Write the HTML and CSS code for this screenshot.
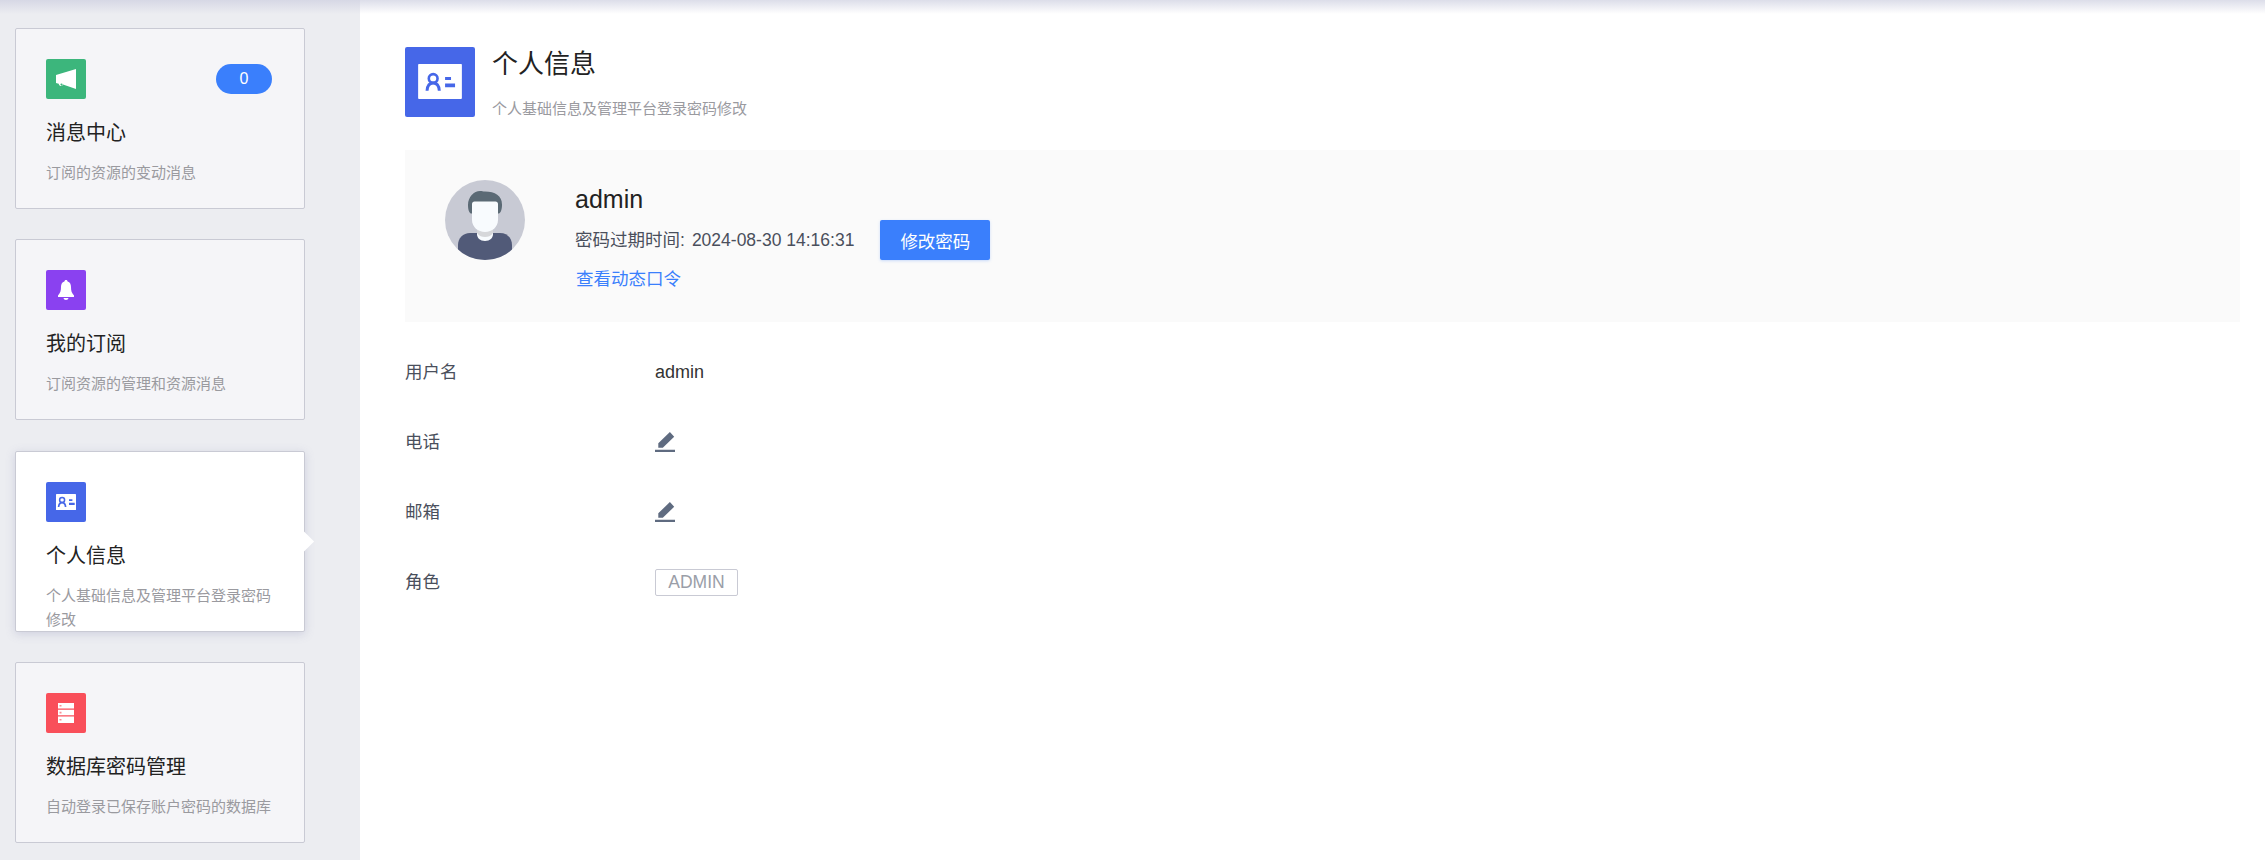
FILE: index.html
```html
<!DOCTYPE html>
<html lang="zh-CN">
<head>
  <meta charset="UTF-8" />
  <title>个人信息</title>
  <link rel="stylesheet" href="styles.css">
</head>
<body>
  <div class="top-shade"></div>
  <div class="layout">
    <aside class="sidebar">
      <div class="card">
        <div class="card-inner">
          <div class="card-top">
            <svg class="card-icon" viewBox="0 0 40 40">
              <rect width="40" height="40" rx="2" fill="#3cb67c"/>
              <path d="M10 16 30 10v20l-13-4.400c-.2 1.800-3.800 2.200-4.300-.9L10 24z" fill="#fff"/>
              <circle cx="15.500" cy="25.600" r="1.100" fill="#3cb67c"/>
            </svg>
            <span class="badge">0</span>
          </div>
          <h3 class="card-title">消息中心</h3>
          <p class="card-desc">订阅的资源的变动消息</p>
        </div>
      </div>
      <div class="card">
        <div class="card-inner">
          <div class="card-top">
            <svg class="card-icon" viewBox="0 0 40 40">
              <rect width="40" height="40" rx="2" fill="#8a41f0"/>
              <path d="M20 10c1 0 1.500.6 1.600 1.600 2.500.8 3.400 3 3.400 5.400 0 3.500.6 6 3 8.500v1.500H12v-1.500c2.400-2.500 3-5 3-8.500 0-2.400.9-4.600 3.400-5.400.1-1 .6-1.600 1.600-1.600zM17.500 28h5c-.2 1.300-1.200 2-2.500 2s-2.300-.7-2.500-2z" fill="#fff"/>
            </svg>
          </div>
          <h3 class="card-title">我的订阅</h3>
          <p class="card-desc">订阅资源的管理和资源消息</p>
        </div>
      </div>
      <div class="card card-active">
        <div class="card-inner">
          <div class="card-top">
            <svg class="card-icon" viewBox="0 0 40 40">
              <rect width="40" height="40" rx="2" fill="#4667e8"/>
              <rect x="10" y="12" width="20" height="16" rx=".6" fill="#fff"/>
              <circle cx="16.100" cy="18" r="2.500" fill="none" stroke="#4667e8" stroke-width="1.500"/>
              <path d="M12.600 25c.2-3 1.500-4.400 3.500-4.400s3.300 1.400 3.500 4.400" fill="none" stroke="#4667e8" stroke-width="1.700"/>
              <path d="M23 17.200h3.400v1.700H23zM23 20.800h5.700v2.200H23z" fill="#4667e8"/>
            </svg>
          </div>
          <h3 class="card-title">个人信息</h3>
          <p class="card-desc">个人基础信息及管理平台登录密码修改</p>
        </div>
      </div>
      <div class="card">
        <div class="card-inner">
          <div class="card-top">
            <svg class="card-icon" viewBox="0 0 40 40">
              <rect width="40" height="40" rx="2" fill="#f94f5a"/>
              <path d="M12 10h16v5.500H12zM12 16.800h16v5.500H12zM12 23.600h16V30H12z" fill="#fff"/>
              <path d="M13.500 12h2v1.600h-2zM13.500 18.800h2v1.600h-2zM13.500 26h2v1.600h-2z" fill="#f98f95"/>
            </svg>
          </div>
          <h3 class="card-title">数据库密码管理</h3>
          <p class="card-desc">自动登录已保存账户密码的数据库</p>
        </div>
      </div>
    </aside>

    <main class="main">
      <header class="page-head">
        <svg class="head-icon" viewBox="0 0 40 40">
          <rect width="40" height="40" rx="1.200" fill="#4667e8"/>
          <rect x="7.500" y="9.700" width="25" height="20" rx=".5" fill="#fff"/>
          <circle cx="16.100" cy="18" r="2.500" fill="none" stroke="#4667e8" stroke-width="1.500"/>
          <path d="M12.600 25c.2-3 1.500-4.400 3.500-4.400s3.300 1.400 3.500 4.400" fill="none" stroke="#4667e8" stroke-width="1.700"/>
          <path d="M22.900 17.200h3.400v1.700h-3.400zM22.900 20.800h5.700v2.200h-5.700z" fill="#4667e8"/>
        </svg>
        <div>
          <h1 class="page-title">个人信息</h1>
          <p class="page-sub">个人基础信息及管理平台登录密码修改</p>
        </div>
      </header>

      <section class="profile">
        <svg class="avatar" viewBox="0 0 80 80">
          <defs><clipPath id="avatarClip"><circle cx="40" cy="40" r="40"/></clipPath></defs>
          <circle cx="40" cy="40" r="40" fill="#c8cad4"/>
          <g clip-path="url(#avatarClip)">
            <path d="M13 80V65c0-7 5-12 12-12h30c7 0 12 5 12 12v15z" fill="#515a78"/>
            <path d="M32 46h16v8c0 4-3 7-8 7s-8-3-8-7z" fill="#f8fbfe"/>
            <path d="M32 46h16v7c-2 3-5 4-8 4s-6-1-8-4z" fill="#d6d7da"/>
            <path d="M26 33.500c-2-.5-3-4-3-8.500 0-8 6-14 12-14 2 0 3 .5 5 .5 10 0 17 4 17 13 0 4.500-1 8-3 9z" fill="#5b6a75"/>
            <path d="M27 24c0-1.500 1-2.500 2.500-2.500h21c1.500 0 2.500 1 2.500 2.500v16c0 7-6 12-13 12s-13-5-13-12z" fill="#f8fbfe"/>
          </g>
        </svg>
        <div class="profile-info">
          <div class="profile-name">admin</div>
          <div class="profile-pwd">
            <span class="pwd-label">密码过期时间:</span>
            <span>2024-08-30 14:16:31</span>
            <button class="btn-primary" type="button">修改密码</button>
          </div>
          <a class="profile-link" href="#">查看动态口令</a>
        </div>
      </section>

      <section class="fields">
        <div class="field">
          <span class="field-label">用户名</span>
          <span class="field-value">admin</span>
        </div>
        <div class="field">
          <span class="field-label">电话</span>
          <svg class="edit-icon" viewBox="0 0 20 20"><path d="M0 17.800h20V20H0zM3.300 15.800v-4.500L14.900 0l4.300 4.800L7.800 15.800z" fill="#5f6b80"/></svg>
        </div>
        <div class="field">
          <span class="field-label">邮箱</span>
          <svg class="edit-icon" viewBox="0 0 20 20"><path d="M0 17.800h20V20H0zM3.300 15.800v-4.500L14.900 0l4.300 4.800L7.800 15.800z" fill="#5f6b80"/></svg>
        </div>
        <div class="field">
          <span class="field-label">角色</span>
          <span class="tag">ADMIN</span>
        </div>
      </section>
    </main>
  </div>
</body>
</html>
```

FILE: styles.css
```css
body {
  margin: 0;
  height: 860px;
  overflow: hidden;
  background: #fff;
  color: #222;
  font-family: "Liberation Sans", "Noto Sans CJK SC", sans-serif;
}
.top-shade {
  position: absolute;
  top: 0;
  left: 0;
  right: 0;
  height: 14px;
  background: linear-gradient(180deg, rgba(205,207,224,0.7) 0%, rgba(205,207,224,0) 100%);
}
.layout {
  display: flex;
  height: 860px;
}

/* left cards */
.sidebar {
  flex: 0 0 360px;
  box-sizing: border-box;
  padding: 28px 55px 0 15px;
  background: #ecedf1;
}
.card {
  position: relative;
  box-sizing: border-box;
  height: 181px;
  margin-bottom: 30.4px;
  background: #f5f5f8;
  border: 1px solid #c9cad4;
  border-radius: 2px;
}
.card-inner {
  box-sizing: border-box;
  height: 100%;
  padding: 30px 30px 0 30px;
  overflow: hidden;
}
.card-active {
  background: #fff;
  box-shadow: 0 2px 10px rgba(120,125,170,0.25);
}
.card-active::after {
  content: "";
  position: absolute;
  top: 82px;
  right: -7px;
  width: 15px;
  height: 15px;
  background: #fff;
  transform: rotate(45deg);
}
.card-top {
  display: flex;
  justify-content: space-between;
  align-items: center;
  height: 40px;
  padding-right: 2px;
}
.card-icon {
  width: 40px;
  height: 40px;
}
.badge {
  width: 56px;
  height: 30px;
  line-height: 30px;
  text-align: center;
  border-radius: 15px;
  background: #3a7ffc;
  color: #fff;
  font-size: 16px;
}
.card-title {
  margin: 19px 0 0 0;
  font-size: 20px;
  line-height: 30px;
  font-weight: normal;
  color: #222;
}
.card-desc {
  margin: 13px 0 0 0;
  font-size: 15px;
  line-height: 24px;
  color: #9a9a9f;
}

/* right side */
.main {
  flex: 1;
  padding: 47px 25px 0 45px;
}
.page-head {
  display: flex;
  gap: 17px;
  height: 70px;
}
.head-icon {
  width: 70px;
  height: 70px;
}
.page-title {
  margin: 0;
  font-size: 26px;
  line-height: 34px;
  font-weight: normal;
  color: #222;
}
.page-sub {
  margin: 18px 0 0 0;
  font-size: 15px;
  line-height: 20px;
  color: #9a9a9f;
}
.profile {
  display: flex;
  gap: 50px;
  height: 172px;
  box-sizing: border-box;
  margin-top: 33px;
  padding: 30px 40px;
  background: #fafafa;
}
.avatar {
  width: 80px;
  height: 80px;
}
.profile-info {
  margin-top: 1px;
}
.profile-name {
  font-size: 25px;
  line-height: 36px;
  color: #222;
}
.profile-pwd {
  display: flex;
  align-items: center;
  margin-top: 3px;
  height: 40px;
  font-size: 17.500px;
  line-height: 24px;
  color: #4a4f5c;
}
.pwd-label {
  margin-right: 7px;
}
.btn-primary {
  width: 110px;
  height: 40px;
  margin-left: 26px;
  padding: 0;
  border: none;
  border-radius: 2px;
  background: #3a7ffc;
  color: #fff;
  font-family: inherit;
  font-size: 17.500px;
  box-shadow: 0 1px 3px rgba(58,127,252,0.25);
}
.profile-link {
  display: block;
  margin: 4px 0 0 1px;
  font-size: 17.500px;
  line-height: 30px;
  color: #3a7ffc;
  text-decoration: none;
}
.fields {
  margin-top: 15px;
}
.field {
  display: flex;
  align-items: center;
  height: 70px;
  font-size: 17.500px;
  line-height: 24px;
}
.field-label {
  flex: 0 0 250px;
  color: #4a4f5c;
}
.field-value {
  font-size: 18px;
  color: #333;
}
.edit-icon {
  width: 20px;
  height: 20px;
}
.tag {
  box-sizing: border-box;
  width: 83px;
  height: 27px;
  line-height: 25px;
  text-align: center;
  border: 1px solid #c9cad4;
  border-radius: 2px;
  color: #9a9ea8;
}
```
